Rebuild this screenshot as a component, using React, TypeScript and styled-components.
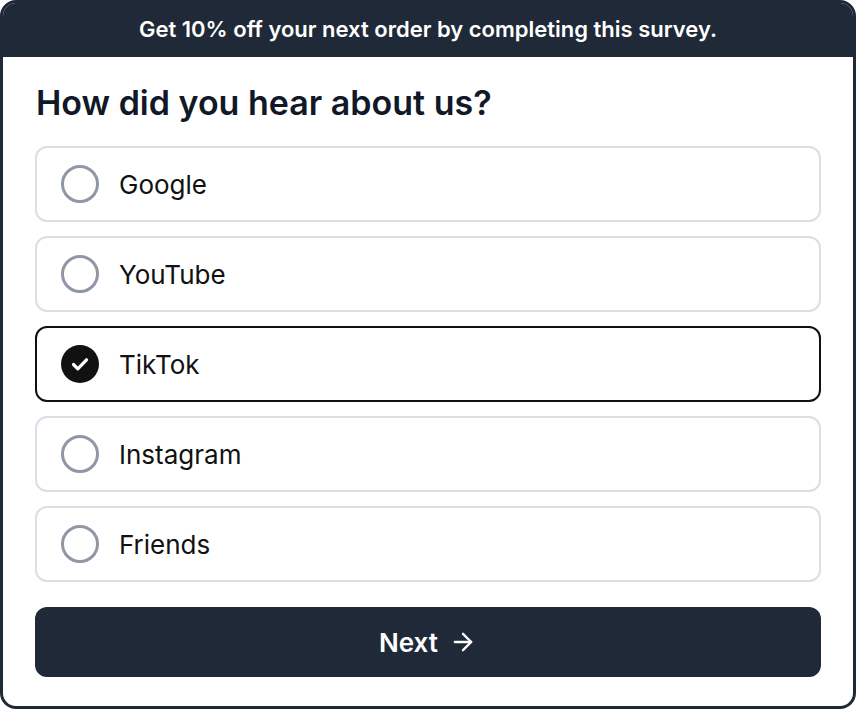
import React, { useState } from "react";
import styled, { createGlobalStyle } from "styled-components";

const GlobalStyle = createGlobalStyle`
  * { box-sizing: border-box; }
  html, body { margin: 0; padding: 0; background: #ffffff; }
  body { font-family: Inter, "Noto Sans", sans-serif; }
`;

const Card = styled.div`
  height: 709px;
  width: 856px;
  border: 3px solid #1f2937;
  border-radius: 16px;
  overflow: hidden;
  display: flex;
  flex-direction: column;
  background: #ffffff;
`;

const Banner = styled.div`
  height: 54px;
  background: #1f2937;
  color: #ffffff;
  display: flex;
  align-items: center;
  justify-content: center;
  font-size: 22px;
  font-weight: 600;
  padding-bottom: 2px;
`;

const Body = styled.div`
  flex: 1;
  display: flex;
  flex-direction: column;
  padding: 26px 32px 29px 32px;
`;

const Heading = styled.h1`
  margin: 0 0 23px 1px;
  font-size: 34px;
  line-height: 40px;
  font-weight: 600;
  color: #111827;
`;

const Options = styled.div`
  display: flex;
  flex-direction: column;
  gap: 14px;
`;

const Option = styled.button<{ $selected: boolean }>`
  height: 76px;
  width: 100%;
  display: flex;
  align-items: center;
  gap: 20px;
  padding: 0 24px;
  border-radius: 12px;
  border: 2px solid ${(p) => (p.$selected ? "#111111" : "#dcdee6")};
  background: #ffffff;
  font-family: inherit;
  font-size: 26px;
  color: #111111;
  cursor: pointer;
  text-align: left;
`;

const Radio = styled.span`
  width: 38px;
  height: 38px;
  border-radius: 50%;
  border: 3px solid #8f97a6;
  flex-shrink: 0;
`;

const CheckMark = styled.svg`
  width: 38px;
  height: 38px;
  flex-shrink: 0;
`;

const NextButton = styled.button`
  margin-top: 25px;
  height: 70px;
  width: 100%;
  border: none;
  border-radius: 12px;
  background: #1f2937;
  color: #ffffff;
  font-family: inherit;
  font-size: 26px;
  font-weight: 600;
  display: flex;
  align-items: center;
  justify-content: center;
  gap: 11px;
  cursor: pointer;
`;

const ArrowIcon = styled.svg`
  width: 28px;
  height: 28px;
  flex-shrink: 0;
`;

const options = ["Google", "YouTube", "TikTok", "Instagram", "Friends"];

export default function App() {
  const [selected, setSelected] = useState("TikTok");
  return (
    <>
      <GlobalStyle />
      <Card>
        <Banner>Get 10% off your next order by completing this survey.</Banner>
        <Body>
          <Heading>How did you hear about us?</Heading>
          <Options>
            {options.map((o) => (
              <Option key={o} $selected={selected === o} onClick={() => setSelected(o)}>
                {selected === o ? (
                  <CheckMark viewBox="0 0 38 38">
                    <circle cx="19" cy="19" r="19" fill="#111111" />
                    <path
                      d="M12.5 19.5l4.3 4.3 8.7-9"
                      fill="none"
                      stroke="#ffffff"
                      strokeWidth="3.2"
                      strokeLinecap="round"
                      strokeLinejoin="round"
                    />
                  </CheckMark>
                ) : (
                  <Radio />
                )}
                {o}
              </Option>
            ))}
          </Options>
          <NextButton>
            Next
            <ArrowIcon viewBox="0 0 24 24" fill="none" stroke="#ffffff" strokeWidth="2" strokeLinecap="round" strokeLinejoin="round">
              <path d="M5 12h14" />
              <path d="m12 5 7 7-7 7" />
            </ArrowIcon>
          </NextButton>
        </Body>
      </Card>
    </>
  );
}
